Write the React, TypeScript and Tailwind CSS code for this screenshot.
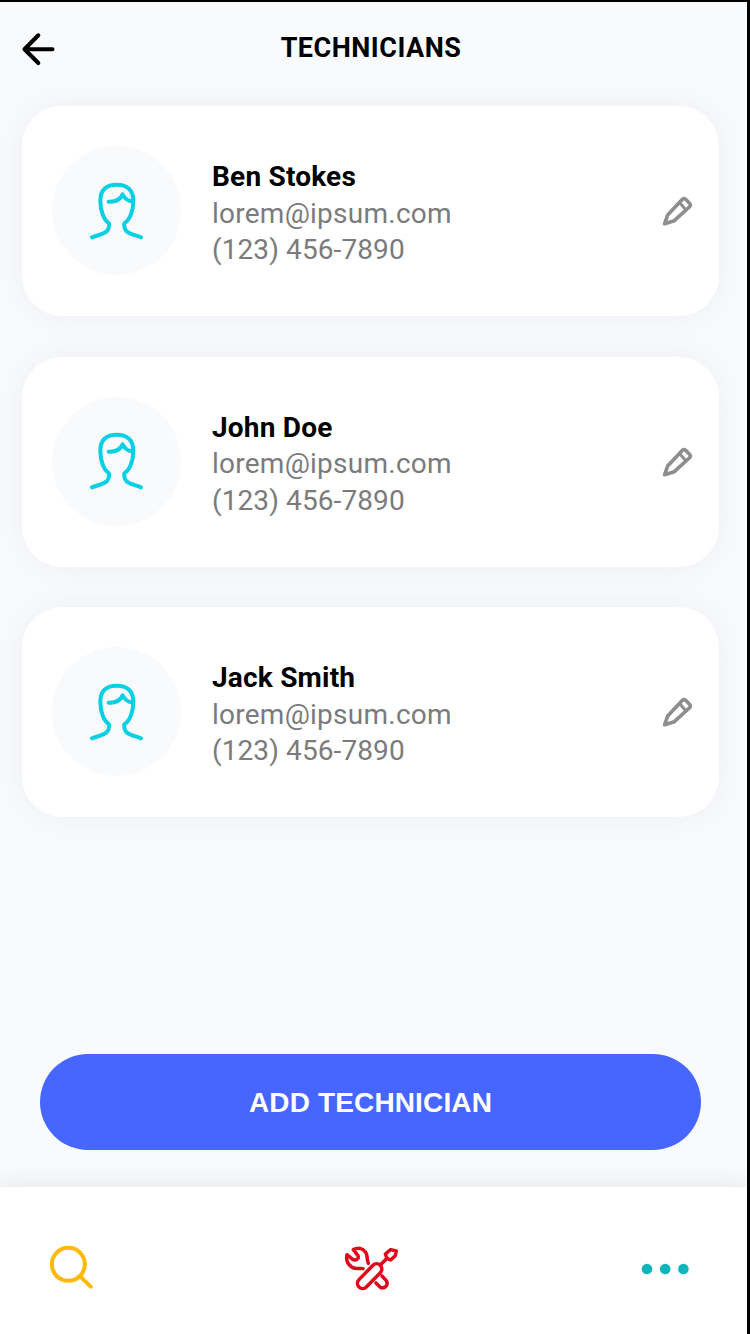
type Technician = {
    id: number;
    name: string;
    email: string;
    phone: string;
};

const technicians: Technician[] = [
    { id: 1, name: "Ben Stokes", email: "lorem@ipsum.com", phone: "(123) 456-7890" },
    { id: 2, name: "John Doe", email: "lorem@ipsum.com", phone: "(123) 456-7890" },
    { id: 3, name: "Jack Smith", email: "lorem@ipsum.com", phone: "(123) 456-7890" },
];

function BackIcon() {
    return (
        <svg
            viewBox="0 0 34 34"
            className="size-[34px]"
            fill="none"
            stroke="currentColor"
            strokeWidth="4.1"
            strokeLinecap="round"
            strokeLinejoin="round"
        >
            <path d="M31.5 17.2H3.5M17.3 3.3L3.5 17.2L17.3 31" />
        </svg>
    );
}

function PersonIcon() {
    return (
        <svg
            viewBox="150 122 160 180"
            className="h-[60px] w-[53.3px]"
            fill="none"
            stroke="#08d0e2"
            strokeWidth="12"
            strokeLinecap="round"
            strokeLinejoin="round"
        >
            <path d="M156 291C174 284 191 282 201 272C207 266 208 259 207 249C192 239 181 213 181 181C181 148 200 133 230 133C260 133 280 148 280 181C280 213 269 239 253 249C252 259 253 266 259 272C269 282 286 284 303 291" />
            <path d="M206 184C228 185 242 176 248 162C254 173 262 183 277 183" />
        </svg>
    );
}

function PencilIcon() {
    return (
        <svg
            viewBox="66 46 94 94"
            className="size-[31.3px]"
            fill="none"
            stroke="#8e8e8e"
            strokeWidth="11"
            strokeLinejoin="round"
        >
            <path d="M74 132L83 106L126 60Q131 54 137 59L148 70Q154 76 148 82L103 123Z" />
            <path d="M118 68L138 91" strokeWidth="9" />
            <path d="M69 137L76 118L88 130Z" fill="#8e8e8e" stroke="none" />
        </svg>
    );
}

function SearchIcon() {
    return (
        <svg
            viewBox="57 59 134 134"
            className="size-[44.7px]"
            fill="none"
            stroke="#ffba08"
            strokeWidth="12"
            strokeLinecap="round"
        >
            <circle cx="115" cy="117" r="49.5" />
            <path d="M151 154L182 184" />
        </svg>
    );
}

function ToolsIcon() {
    return (
        <svg
            viewBox="42 42 166 142"
            className="h-[47.3px] w-[55.3px]"
            fill="none"
            stroke="#e2061c"
            strokeWidth="10.5"
            strokeLinecap="round"
            strokeLinejoin="round"
        >
            <path d="M99 113C88 111 76 116 65 108C52 99 48 84 51 71L68 85C77 91 88 83 84 74L70 56C83 49 98 51 107 64C114 74 110 86 115 97" />
            <path d="M87 146L129 103A15.5 15.5 0 0 1 151 125L109 168A15.5 15.5 0 0 1 87 146Z" />
            <path d="M154 99L171 82" />
            <path d="M166 69L182 56L199 60L196 74L182 87L171 82Z" />
            <path d="M156 135L169 149Q175 159 167 167Q159 174 150 168L138 156" />
        </svg>
    );
}

function MoreIcon() {
    return (
        <svg viewBox="0 0 48 12" className="h-3 w-12" fill="#0fb5ba">
            <circle cx="6" cy="6" r="5.3" />
            <circle cx="24.2" cy="6" r="5.3" />
            <circle cx="42.4" cy="6" r="5.3" />
        </svg>
    );
}

function TechnicianCard({ technician }: { technician: Technician }) {
    return (
        <li className="flex h-[210px] items-center rounded-[40px] bg-white pl-[30px] pr-[26px] shadow-[0_0_36px_rgba(40,45,60,0.05)]">
            <div className="mb-px flex size-[129px] shrink-0 items-center justify-center rounded-full bg-[#f9fafc]">
                <PersonIcon />
            </div>
            <div className="ml-[31px] mt-[6px] flex-1 text-[28px] leading-[36.5px] text-[#7b7b7b]">
                <h2 className="font-bold tracking-[0.2px] text-black">{technician.name}</h2>
                <p className="tracking-[0.25px]">{technician.email}</p>
                <p className="tracking-[0.1px]">{technician.phone}</p>
            </div>
            <button aria-label={`Edit ${technician.name}`}>
                <PencilIcon />
            </button>
        </li>
    );
}

export default function App() {
    return (
        <div className="flex h-[1334px] w-[750px] flex-col overflow-hidden border-r-[3px] border-t-2 border-black bg-[#f9fafc] font-['Roboto',sans-serif]">
            <header className="grid h-[104px] shrink-0 grid-cols-[34px_1fr_34px] items-start pl-[21px] pr-[26px] pt-[30px]">
                <button aria-label="Back">
                    <BackIcon />
                </button>
                <h1 className="text-center text-[27px] font-bold leading-[32px] tracking-[0.5px] text-black">
                    TECHNICIANS
                </h1>
            </header>

            <ul className="flex flex-1 flex-col gap-[40.5px] pl-[22px] pr-[28px]">
                {technicians.map((technician) => (
                    <TechnicianCard key={technician.id} technician={technician} />
                ))}
            </ul>

            <div className="pb-[37px] pl-10 pr-[46px]">
                <button className="h-[96px] w-full rounded-full bg-[#4666ff] pt-[2px] font-['Liberation_Sans',Arial,sans-serif] text-[28px] font-bold tracking-[0.15px] text-white">
                    ADD TECHNICIAN
                </button>
            </div>

            <nav className="flex h-[147px] shrink-0 items-start justify-between bg-white pl-[49px] pr-[58px] pt-[57.5px] shadow-[0_0_24px_rgba(40,45,60,0.11)]">
                <button aria-label="Search">
                    <SearchIcon />
                </button>
                <button aria-label="Services" className="ml-[8px]">
                    <ToolsIcon />
                </button>
                <button aria-label="More" className="mt-[18.5px]">
                    <MoreIcon />
                </button>
            </nav>
        </div>
    );
}
